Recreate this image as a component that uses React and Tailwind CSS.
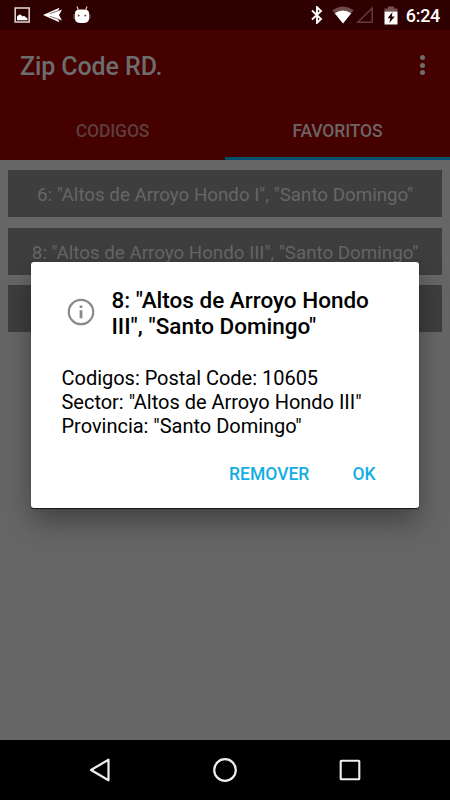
import { useState } from 'react';

const FAVORITES = [
  { id: 6, sector: 'Altos de Arroyo Hondo I', province: 'Santo Domingo', code: '10605' },
  { id: 8, sector: 'Altos de Arroyo Hondo III', province: 'Santo Domingo', code: '10605' },
  { id: 7, sector: 'Altos de Arroyo Hondo II', province: 'Santo Domingo', code: '10605' },
];

const TABS = ['CODIGOS', 'FAVORITOS'];

function StatusBar() {
  return (
    <div className="flex h-[30px] shrink-0 items-center justify-between bg-[#2f0000] pl-[14px] pr-[10px] text-white">
      <div className="flex items-center">
        <svg width="16" height="16" viewBox="0 0 16 16">
          <rect x="1.2" y="1" width="14" height="14" fill="none" stroke="#d8cccc" strokeWidth="1.6" />
          <path d="M3 13.2V9.5L5 7.8L6.5 7.5L8.5 9.5L10 8.8L13.5 11.5V13.2Z" fill="#fff" />
        </svg>
        <svg className="ml-[12px]" width="21" height="16" viewBox="0 0 21 16">
          <path d="M1 8L17.5 0.8L16 4L20 2.6L17 8L20 13.4L16 12L17.5 15.2Z" fill="#fff" />
          <path d="M8 6.6L17.5 3.3M8 9.4L17.5 12.7" stroke="#6b4040" strokeWidth="0.8" />
        </svg>
        <svg className="ml-[10px]" width="18" height="18" viewBox="0 0 18 18">
          <path d="M4 0.5L5.3 4M14 0.5L12.7 4" stroke="#d8caca" strokeWidth="1.2" />
          <path d="M2 7C2 4.3 4 3.4 9 3.4S16 4.3 16 7V12.5C16 15.8 14 17 9 17S2 15.8 2 12.5Z" fill="#fff" />
          <path d="M1.2 8V13M16.8 8V13" stroke="#a99" strokeWidth="0.8" />
          <circle cx="5.7" cy="9.5" r="1" fill="#7a4d4d" />
          <circle cx="12.3" cy="9.5" r="1" fill="#7a4d4d" />
        </svg>
      </div>
      <div className="flex items-center">
        <svg width="12" height="18" viewBox="0 0 12 18">
          <path d="M1 4.5L10 13L6 16.8V1.2L10 5L1 13.5" fill="none" stroke="#fff" strokeWidth="1.9" />
        </svg>
        <svg className="ml-[9px]" width="22" height="18" viewBox="0 0 22 18">
          <path d="M0.3 4.2Q11 -3 21.7 4.2L11 17.5Z" fill="#6f4b4b" />
          <path d="M2.8 7.2Q11 2 19.2 7.2L11 17.5Z" fill="#fff" />
        </svg>
        <svg className="ml-[2px]" width="18" height="18" viewBox="0 0 18 18">
          <path d="M1.8 16.2H16.2V2Z" fill="none" stroke="#623c3c" strokeWidth="1.5" />
        </svg>
        <svg className="ml-[10px]" width="14" height="19" viewBox="0 0 14 19">
          <path d="M0.5 2.5H4V0.5H10V2.5H13.5V5.5H0.5Z" fill="#745252" />
          <path d="M0.5 5.5H13.5V18.5H0.5Z" fill="#fff" />
          <path d="M8.5 6L3.5 12.3H6.3L5.3 17L10.8 10.6H7.8Z" fill="#2f0000" />
        </svg>
        <span className="ml-[7.5px] pt-[2px] text-[18px] font-medium leading-none tracking-[-0.3px]">6:24</span>
      </div>
    </div>
  );
}

function AppBar({ active, onSelect }) {
  return (
    <header className="h-[130px] shrink-0 bg-[#450000]">
      <div className="flex h-[70px] items-center justify-between pl-[20px] pr-[25px]">
        <h1 className="pt-[3px] text-[25px] font-medium tracking-[-0.1px] text-[#6d6d6d]">Zip Code RD.</h1>
        <div className="flex flex-col gap-[2.5px]">
          <span className="size-[5px] rounded-full bg-[#6d6d6d]" />
          <span className="size-[5px] rounded-full bg-[#6d6d6d]" />
          <span className="size-[5px] rounded-full bg-[#6d6d6d]" />
        </div>
      </div>
      <nav className="grid h-[60px] grid-cols-2">
        {TABS.map(tab => (
          <button
            key={tab}
            onClick={() => onSelect(tab)}
            className={`border-b-[3px] pt-[5px] text-[17.5px] font-medium tracking-[-0.1px] ${active === tab ? 'border-[#00516c] text-[#6a6666]' : 'border-transparent text-[#5e3d3d]'}`}
          >
            {tab}
          </button>
        ))}
      </nav>
    </header>
  );
}

function InfoDialog({ item, onClose, onRemove }) {
  return (
    <div className="absolute left-[31px] top-[262px] flex h-[246px] w-[388px] flex-col rounded-[3px] bg-white text-black shadow-[0_1px_1px_rgba(0,0,0,0.7),0_14px_28px_rgba(0,0,0,0.35)]">
      <div className="flex items-start pl-[36px] pt-[25px]">
        <svg width="28" height="28" viewBox="0 0 28 28" className="mt-[11px] shrink-0">
          <circle cx="14" cy="14" r="12.2" fill="none" stroke="#8a8a8a" strokeWidth="2.2" />
          <path d="M14 12.3V20.3M14 7.4V10" stroke="#8a8a8a" strokeWidth="2.8" />
        </svg>
        <h2 className="ml-[16.5px] whitespace-nowrap text-[22.5px] font-medium leading-[26px]">
          {item.id}: "Altos de Arroyo Hondo<br />III", "{item.province}"
        </h2>
      </div>
      <div className="mt-[27px] whitespace-nowrap pl-[30.5px] text-[20px] leading-[24px] tracking-[-0.02px]">
        <p>Codigos: Postal Code: {item.code}</p>
        <p>Sector: "{item.sector}"</p>
        <p>Provincia: "{item.province}"</p>
      </div>
      <div className="mt-[24px] flex justify-end gap-[43px] pr-[43.5px] text-[17.5px] font-medium leading-[24px] text-[#12aee2]">
        <button onClick={onRemove}>REMOVER</button>
        <button onClick={onClose}>OK</button>
      </div>
    </div>
  );
}

function NavBar() {
  return (
    <div className="flex h-[60px] shrink-0 items-center justify-center gap-[97px] bg-black">
      <svg width="28" height="28" viewBox="0 0 28 28">
        <path d="M5 14L22.5 3.7V24.3Z" fill="none" stroke="#eee" strokeWidth="2.2" strokeLinejoin="round" />
      </svg>
      <svg width="28" height="28" viewBox="0 0 28 28">
        <circle cx="14" cy="14" r="10.8" fill="none" stroke="#eee" strokeWidth="2.2" />
      </svg>
      <svg width="28" height="28" viewBox="0 0 28 28">
        <rect x="4.7" y="4.7" width="18.6" height="18.6" rx="0.6" fill="none" stroke="#eee" strokeWidth="2.1" />
      </svg>
    </div>
  );
}

export default function App() {
  const [tab, setTab] = useState('FAVORITOS');
  const [items, setItems] = useState(FAVORITES);
  const [selected, setSelected] = useState(FAVORITES[1]);

  const remove = () => {
    setItems(items.filter(i => i.id !== selected.id));
    setSelected(null);
  };

  return (
    <div className="relative flex h-[800px] w-[450px] flex-col overflow-hidden bg-[#666] font-['Roboto',sans-serif]">
      <StatusBar />
      <AppBar active={tab} onSelect={setTab} />

      <main className="flex flex-1 flex-col gap-[10.5px] px-[8px] pt-[10px]">
        {items.map(item => (
          <button
            key={item.id}
            onClick={() => setSelected(item)}
            className="h-[47px] whitespace-nowrap bg-[#3e3e3e] pt-[4px] text-[18.75px] text-[#666]"
          >
            {item.id}: "{item.sector}", "{item.province}"
          </button>
        ))}
      </main>

      <NavBar />

      {selected && <InfoDialog item={selected} onClose={() => setSelected(null)} onRemove={remove} />}
    </div>
  );
}
